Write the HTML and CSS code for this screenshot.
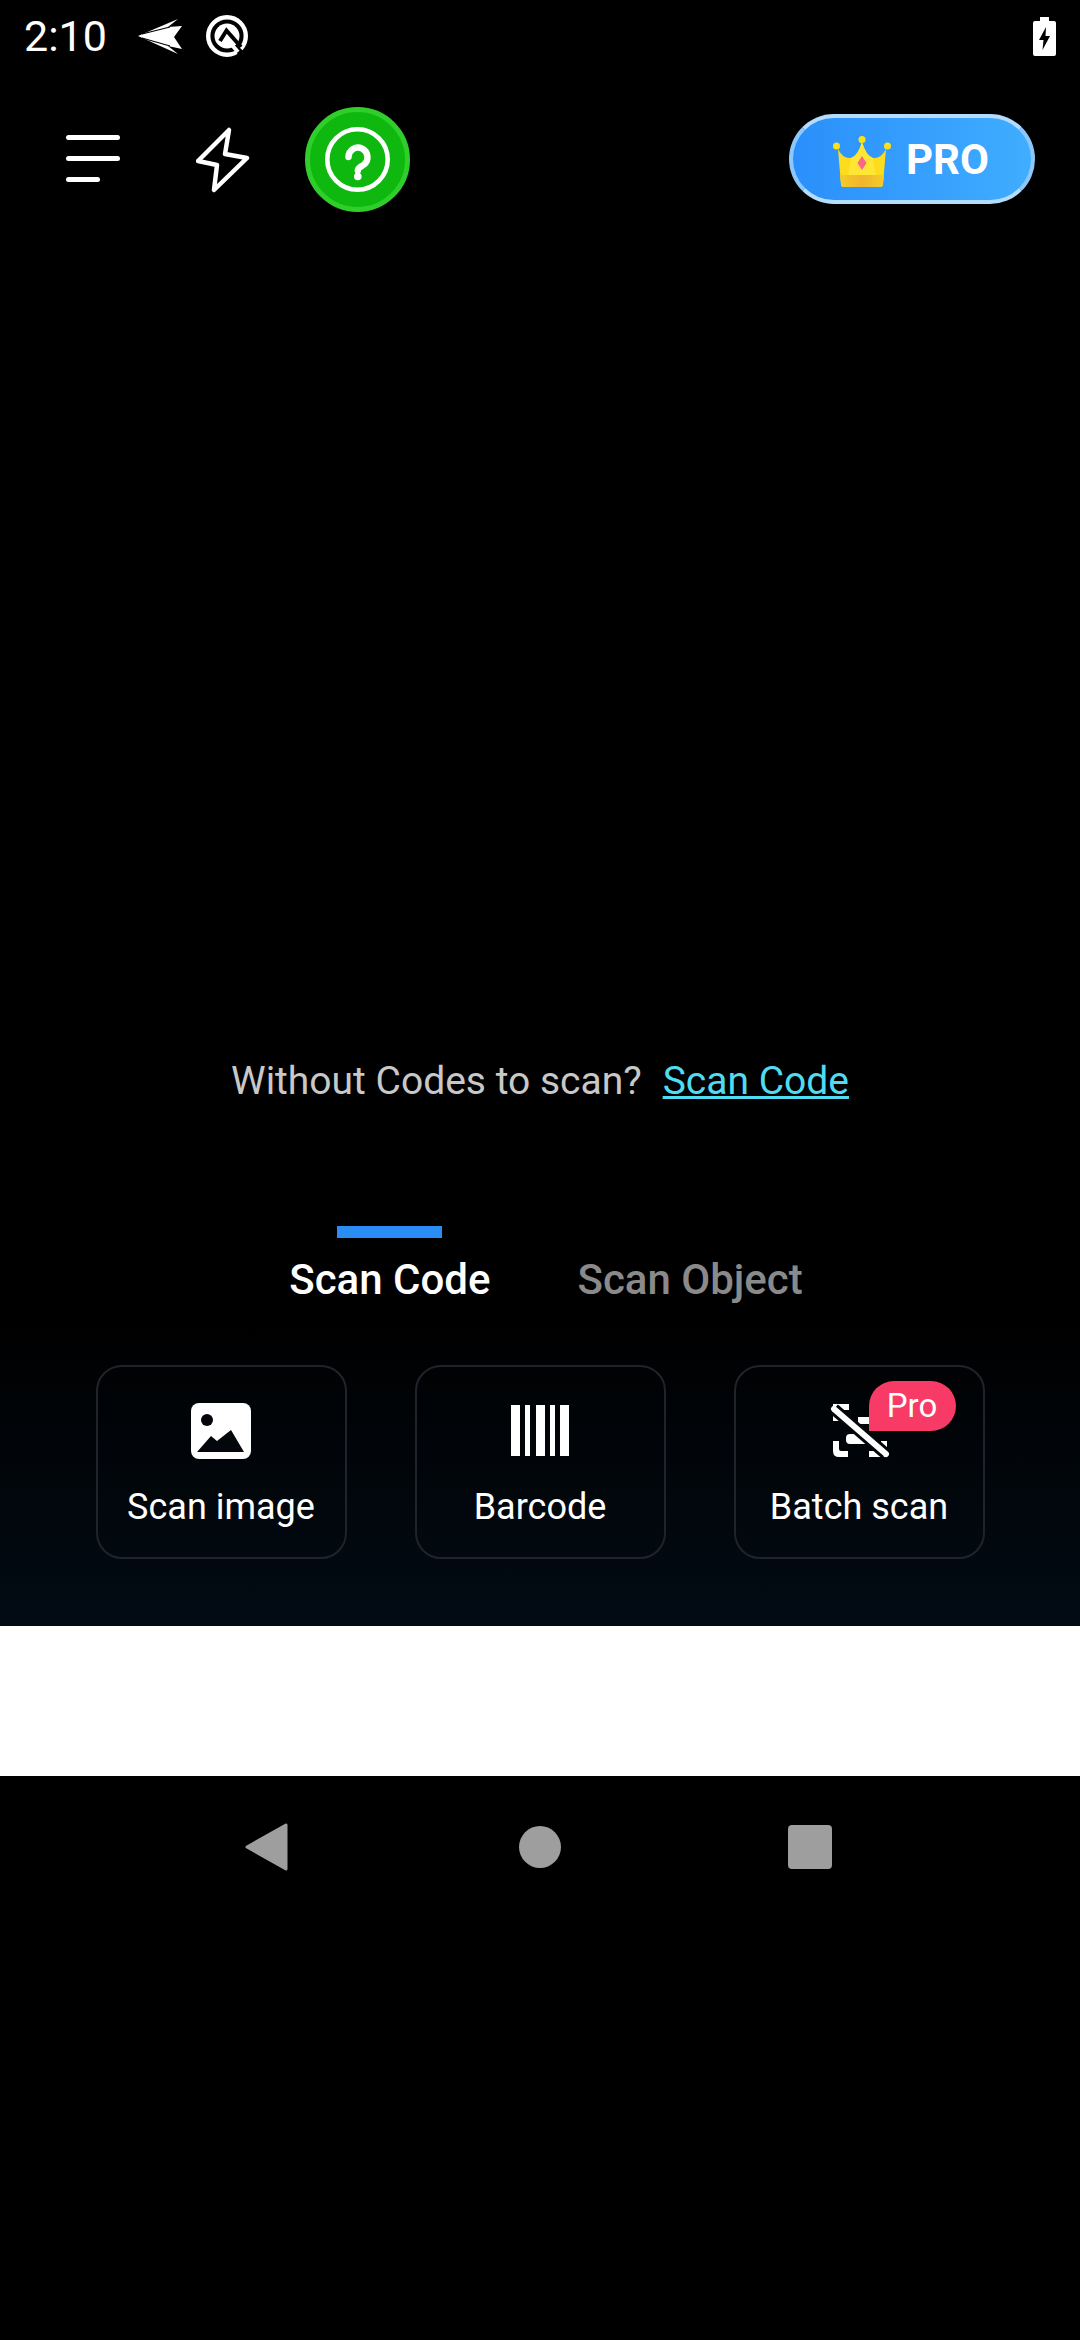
FILE: index.html
```html
<!DOCTYPE html>
<html lang="en">
<head>
    <meta charset="UTF-8">
    <title>Scan</title>
    <link rel="stylesheet" href="styles.css">
</head>
<body>

<div class="status-bar">
    <span class="time">2:10</span>
    <svg class="plane" viewBox="0 0 45 37"><path d="M0 18 L40 1 L30 9 L44 8 L36 19 L44 31 L30 28 L40 36 Z" fill="#fff"/><path d="M4 16 L32 9 M4 20 L32 28" stroke="#000" stroke-width="1.2"/></svg>
    <svg class="q-icon" viewBox="0 0 44 44"><circle cx="22" cy="22" r="18.8" fill="none" stroke="#fff" stroke-width="4.4"/><circle cx="22" cy="22" r="12.5" fill="#fff"/><path d="M15 27 L21.5 16.5 L36 33" fill="none" stroke="#000" stroke-width="4"/><path d="M30 33 L40 43" stroke="#000" stroke-width="6"/><path d="M26 30 L33 38" stroke="#fff" stroke-width="4"/></svg>
    <svg class="battery" viewBox="0 0 23 39"><path d="M7 0 H16 V4 H21 Q23 4 23 6 V37 Q23 39 21 39 H2 Q0 39 0 37 V6 Q0 4 2 4 H7 Z" fill="#fff"/><path d="M13 10 L6 23 H10.5 L9.5 33 L17 19 H12.5 Z" fill="#000"/></svg>
</div>

<div class="top-bar">
    <div class="menu-icon">
        <span class="line"></span>
        <span class="line"></span>
        <span class="line short"></span>
    </div>
    <svg class="flash" viewBox="0 0 54 66"><path d="M33 3 L29 27 L51 31 L18 63 L21 38 L2 34 Z" fill="none" stroke="#fff" stroke-width="4.5" stroke-linejoin="round"/></svg>
    <div class="help-btn">
        <svg class="help-icon" viewBox="0 0 65 65"><circle cx="32.5" cy="32.5" r="30.2" fill="none" stroke="#fff" stroke-width="4.6"/><path d="M23.5 30 a9.5 9.5 0 1 1 15.5 7.5 c-3.5 2.5 -6.2 3.5 -6.2 6" fill="none" stroke="#fff" stroke-width="6.4" stroke-linecap="round"/><circle cx="32.8" cy="49.5" r="3.8" fill="#fff"/></svg>
    </div>
    <div class="pro-btn">
        <svg class="crown" viewBox="0 0 58 52">
            <defs>
                <linearGradient id="crown-base" x1="0" x2="1" y1="0" y2="0">
                    <stop offset="0" stop-color="#f6cc28"/>
                    <stop offset="0.5" stop-color="#efb52e"/>
                    <stop offset="1" stop-color="#f6cc28"/>
                </linearGradient>
            </defs>
            <path d="M5 13 Q10 23 18 22 Q25 20 29 6 Q33 20 40 22 Q48 23 53 13 L50 48 Q50 51 47 51 H11 Q8 51 8 48 Z" fill="#fcdc1c"/>
            <path d="M18 22 Q25 20 29 6 Q33 20 40 22 L43 40 H15 Z" fill="#ffe635"/>
            <path d="M7 39 H51 L50 48 Q50 51 47 51 H11 Q8 51 8 48 Z" fill="url(#crown-base)"/>
            <circle cx="3.5" cy="10" r="3.5" fill="#fde11a"/>
            <circle cx="29" cy="3.5" r="3.5" fill="#fde11a"/>
            <circle cx="54.5" cy="10" r="3.5" fill="#fde11a"/>
            <path d="M29 20 L33.5 27 L29 34 L24.5 27 Z" fill="#f9668a"/>
        </svg>
        <span class="pro-label">PRO</span>
    </div>
</div>

<div class="camera-area">
    <p class="hint">Without Codes to scan?<a class="hint-link">Scan Code</a></p>
</div>

<div class="bottom-panel">
    <div class="tabs">
        <div class="tab active">
            <span class="tab-mark"></span>
            <span>Scan Code</span>
        </div>
        <div class="tab">
            <span class="tab-mark"></span>
            <span>Scan Object</span>
        </div>
    </div>
    <div class="cards">
        <div class="card">
            <svg class="card-icon" viewBox="0 0 60 56"><rect width="60" height="56" rx="8" fill="#fff"/><circle cx="16" cy="17" r="6" fill="#03060b"/><path d="M6 49 L20 33 L26 38 L40 27 L53 49 Z" fill="#03060b"/></svg>
            <span>Scan image</span>
        </div>
        <div class="card">
            <svg class="card-icon" viewBox="0 0 60 56"><path d="M1 2 H10 V53 H1 Z M15 2 H20 V53 H15 Z M26 2 H35 V53 H26 Z M40 2 H45 V53 H40 Z M50 2 H59 V53 H50 Z" fill="#fff"/></svg>
            <span>Barcode</span>
        </div>
        <div class="card">
            <svg class="card-icon" viewBox="0 0 60 56"><path d="M4 1 H20 V7 H10 V18 H4 Z M4 38 H10 V46 Q10 48 12 48 H19 V54 H10 Q4 54 4 48 Z M40 48 H52 V38 H58 V54 H40 Z" fill="#fff"/><path d="M29 14 H42 V21 H29 Z" fill="#fff"/><rect x="17" y="31" width="22" height="10" rx="4" fill="#fff"/><path d="M5 6 L57 51" stroke="#03060b" stroke-width="12"/><path d="M5 6 L57 51" stroke="#fff" stroke-width="6" stroke-linecap="round"/></svg>
            <span>Batch scan</span>
            <span class="badge">Pro</span>
        </div>
    </div>
</div>

<div class="ad-slot"></div>

<div class="nav-bar">
    <svg class="nav-back" viewBox="0 0 43 48"><path d="M41 2 V46 L2 24 Z" fill="#9e9e9e" stroke="#9e9e9e" stroke-width="3" stroke-linejoin="round"/></svg>
    <span class="nav-home"></span>
    <span class="nav-recent"></span>
</div>

</body>
</html>
```

FILE: styles.css
```css
* {
    box-sizing: border-box;
}

body {
    margin: 0;
    width: 1080px;
    height: 2340px;
    overflow: hidden;
    background-color: #000;
    color: #fff;
    font-family: Roboto, sans-serif;
}

.status-bar {
    display: flex;
    align-items: center;
    height: 72px;
    padding: 0 24px;
}

.time {
    font-size: 43px;
    width: 82px;
    margin-right: 32px;
}

.plane {
    width: 45px;
    height: 37px;
    margin-right: 22px;
}

.q-icon {
    width: 44px;
    height: 44px;
}

.battery {
    width: 23px;
    height: 39px;
    margin-left: auto;
}

.top-bar {
    display: flex;
    align-items: center;
    height: 174px;
    padding: 0 45px 0 66px;
}

.menu-icon {
    display: flex;
    flex-direction: column;
    gap: 16px;
    width: 54px;
    margin-bottom: 2px;
}

.line {
    display: block;
    height: 5px;
    border-radius: 3px;
    background-color: #fff;
}

.line.short {
    width: 34px;
}

.flash {
    width: 54px;
    height: 66px;
    margin-left: 76px;
    margin-top: 2px;
}

.help-btn {
    display: flex;
    align-items: center;
    justify-content: center;
    width: 105px;
    height: 105px;
    margin-left: 55px;
    border: 5px solid #2fce2a;
    border-radius: 50%;
    background-color: #0fb80f;
}

.help-icon {
    width: 65px;
    height: 65px;
}

.pro-btn {
    display: flex;
    align-items: center;
    width: 246px;
    height: 90px;
    margin-left: auto;
    padding-left: 40px;
    border: 4px solid #8cc8fb;
    border-top-color: #b5dcfc;
    border-bottom-color: #b5dcfc;
    border-radius: 45px;
    background: linear-gradient(90deg, #2a8ffb, #40adff);
}

.crown {
    width: 58px;
    height: 52px;
    margin-top: 6px;
}

.pro-label {
    margin-left: 15px;
    font-size: 42px;
    font-weight: 700;
}

.camera-area {
    display: flex;
    flex-direction: column;
    justify-content: flex-end;
    height: 858px;
}

.hint {
    margin: 0;
    text-align: center;
    font-size: 39px;
    line-height: 46px;
    color: #c8c8c8;
}

.hint-link {
    margin-left: 21px;
    color: #4fdcf2;
    text-decoration: underline;
}

.bottom-panel {
    height: 522px;
    padding-top: 122px;
    background: linear-gradient(180deg, #000 0%, #000 40%, #020b14 100%);
}

.tabs {
    display: flex;
    justify-content: center;
    gap: 87px;
    padding-left: 12px;
    font-size: 42px;
    font-weight: 500;
    color: #8a8a8a;
}

.tab {
    display: flex;
    flex-direction: column;
    align-items: center;
}

.tab.active {
    color: #fff;
}

.tab-mark {
    width: 105px;
    height: 12px;
    margin-bottom: 17px;
}

.tab.active .tab-mark {
    background-color: #2a8cf5;
}

.cards {
    display: flex;
    justify-content: center;
    gap: 68px;
    margin-top: 61px;
}

.card {
    position: relative;
    display: flex;
    flex-direction: column;
    align-items: center;
    width: 251px;
    height: 194px;
    padding-top: 36px;
    border: 2px solid #20242a;
    border-radius: 26px;
    font-size: 36px;
}

.card-icon {
    width: 60px;
    height: 56px;
    margin-bottom: 27px;
}

.badge {
    position: absolute;
    top: 14px;
    right: 27px;
    width: 87px;
    height: 50px;
    border-radius: 26px 26px 26px 0;
    background-color: #f73b66;
    text-align: center;
    font-size: 33px;
    line-height: 50px;
}

.ad-slot {
    height: 150px;
    background-color: #fff;
}

.nav-bar {
    display: flex;
    align-items: center;
    height: 142px;
    padding-left: 245px;
}

.nav-back {
    width: 43px;
    height: 48px;
}

.nav-home {
    width: 42px;
    height: 42px;
    margin-left: 231px;
    border-radius: 50%;
    background-color: #9e9e9e;
}

.nav-recent {
    width: 44px;
    height: 44px;
    margin-left: 227px;
    border-radius: 4px;
    background-color: #9e9e9e;
}
```
